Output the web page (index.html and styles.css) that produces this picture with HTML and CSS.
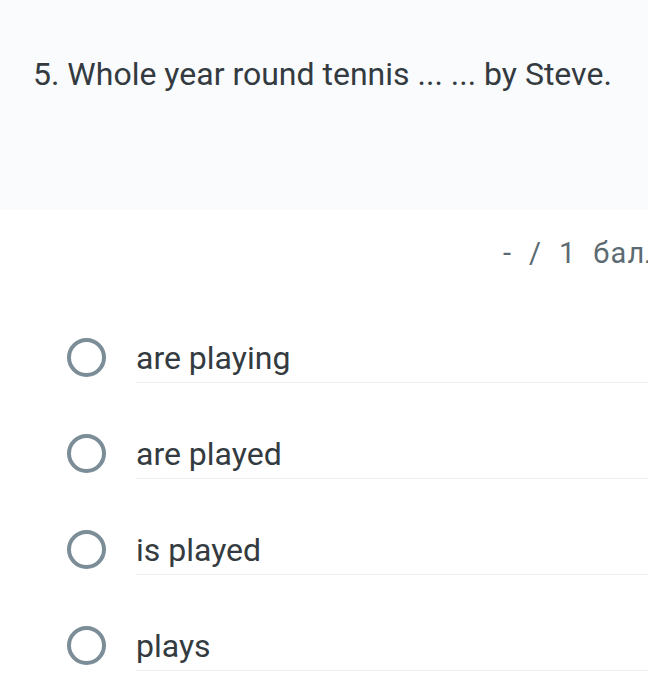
FILE: index.html
```html
<!DOCTYPE html>
<html>
<head>
<meta charset="utf-8">
<link rel="stylesheet" href="styles.css">
</head>
<body>
<div class="page">
  <div class="header">
    <div class="question">5. Whole year round tennis ... ... by Steve.</div>
  </div>
  <div class="points">-&nbsp; /&nbsp; 1&nbsp; балл</div>
  <div class="options">
    <div class="option"><span class="radio"></span><span class="label">are playing</span></div>
    <div class="option"><span class="radio"></span><span class="label">are played</span></div>
    <div class="option"><span class="radio"></span><span class="label">is played</span></div>
    <div class="option"><span class="radio"></span><span class="label">plays</span></div>
  </div>
</div>
</body>
</html>
```
FILE: styles.css
```css
html, body {
  margin: 0;
  padding: 0;
  background: #ffffff;
  overflow: hidden;
}
.page {
  width: 648px;
  height: 678px;
  overflow: hidden;
  font-family: Roboto, "Noto Sans", sans-serif;
}
.header {
  background: #f9fbfd;
  height: 210px;
  padding: 55px 0 0 33px;
  box-sizing: border-box;
}
.question {
  font-size: 32px;
  line-height: 38px;
  color: #333a40;
  white-space: nowrap;
}
.points {
  margin-top: 26px;
  padding-left: 503px;
  font-size: 29px;
  line-height: 34px;
  color: #5c6a72;
  white-space: nowrap;
  letter-spacing: 1.2px;
}
.options {
  margin-top: 40px;
  display: flex;
  flex-direction: column;
}
.option {
  display: flex;
  align-items: flex-start;
  height: 96px;
}
.radio {
  flex: none;
  width: 39px;
  height: 39px;
  box-sizing: border-box;
  border: 4px solid #7b8d97;
  border-radius: 50%;
  margin: 28px 30px 0 67px;
}
.label {
  flex: 1;
  font-size: 32px;
  line-height: 38px;
  color: #343b40;
  padding-top: 29px;
  height: 43px;
  border-bottom: 1.5px solid #eceeef;
}
```
